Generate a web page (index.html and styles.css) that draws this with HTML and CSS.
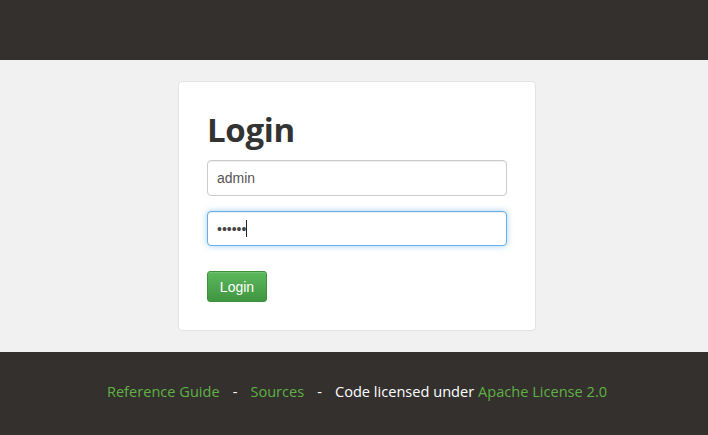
FILE: index.html
```html
<!DOCTYPE html>
<html>
<head>
<meta charset="utf-8">
<link rel="stylesheet" href="styles.css">
</head>
<body>
<header class="topbar"></header>
<main class="main">
  <form class="card">
    <h1 class="title">Login</h1>
    <input class="field" type="text" value="admin">
    <div class="field-wrap">
      <input class="field field-focus" type="password" value="123456">
      <span class="caret"></span>
    </div>
    <button class="btn" type="button">Login</button>
  </form>
</main>
<footer class="footer">
  <a class="link" href="#">Reference Guide</a><span class="sep">-</span><a class="link" href="#">Sources</a><span class="sep">-</span><span class="txt">Code licensed under </span><a class="link" href="#">Apache License 2.0</a>
</footer>
</body>
</html>
```
FILE: styles.css
```css
html, body { margin: 0; padding: 0; }
body { font-family: "Open Sans", "Liberation Sans", sans-serif; background: #f1f1f1; }
.topbar { height: 60px; background: #34302d; }
.main { height: 292px; box-sizing: border-box; padding: 21px 0 0 6px; display: flex; justify-content: center; background: #f1f1f1; }
.card {
  width: 358px; height: 250px; box-sizing: border-box; background: #fff;
  border: 1px solid #e3e3e3; border-radius: 4px; padding: 25px 28px 0 28px;
  display: flex; flex-direction: column; align-items: flex-start;
}
.title { margin: 0 0 8px 0; font-size: 33px; line-height: 45px; font-weight: 700; color: #333; letter-spacing: -0.3px; }
.field {
  display: block; width: 300px; height: 36px; box-sizing: border-box; margin: 0;
  border: 1px solid #ccc; border-radius: 4px; padding: 0 9px; background: #fff;
  font-family: "Liberation Sans", Arial, sans-serif; font-size: 14px; color: #555; outline: none;
  box-shadow: inset 0 1px 1px rgba(0,0,0,.075);
}
.field-wrap { position: relative; margin-top: 15px; }
.field-focus { height: 35px; border-color: #66afe9; box-shadow: inset 0 1px 1px rgba(0,0,0,.075), 0 0 6px rgba(102,175,233,.6); color: #444; }
.caret { position: absolute; left: 39px; top: 9px; width: 1px; height: 17px; background: #222; }
.btn {
  margin-top: 25px; width: 60px; height: 31px; padding: 0; box-sizing: border-box;
  border: 1px solid #3e8f3e; border-radius: 3px; color: #fff;
  background: linear-gradient(to bottom, #5cb85c 0%, #419641 100%);
  font-family: "Liberation Sans", Arial, sans-serif; font-size: 14px;
  box-shadow: inset 0 1px 0 rgba(255,255,255,.15);
}
.footer { height: 83px; box-sizing: border-box; padding: 28px 0 0 6px; background: #34302d; text-align: center; font-size: 14.6px; line-height: 22px; color: #fff; }
.link { color: #5fb045; text-decoration: none; }
.sep { margin: 0 13px; color: #fff; }
.txt { color: #fff; }
```
